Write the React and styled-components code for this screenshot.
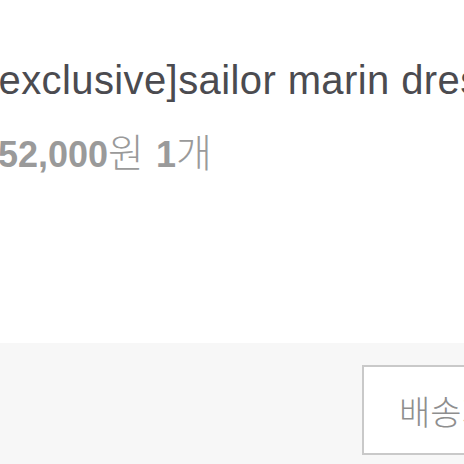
import React from 'react';
import styled, { createGlobalStyle } from 'styled-components';

const Global = createGlobalStyle`
  html, body {
    margin: 0;
    padding: 0;
    background: #fff;
  }
  body {
    font-family: "Liberation Sans", "Noto Sans CJK KR", sans-serif;
  }
`

const Page = styled.div`
  width: 464px;
  height: 464px;
  overflow: hidden;
  display: flex;
  flex-direction: column;
`

const Info = styled.div`
  height: 343px;
  box-sizing: border-box;
  padding-top: 60px;
  white-space: nowrap;
`

const Title = styled.div`
  font-size: 40px;
  line-height: 40px;
  letter-spacing: 0.4px;
  color: #4b4b50;
  margin-left: -13px;
`

const PriceRow = styled.div`
  margin-top: 31px;
  height: 40px;
  font-size: 36px;
  line-height: 40px;
  color: #9a9a9a;
  margin-left: -2px;
`

const Num = styled.b`
  font-weight: 700;
  margin-left: ${p => (p.$gap ? '2px' : '0')};
`

const Unit = styled.span`
  font-family: "Noto Sans CJK KR", sans-serif;
  font-weight: 300;
  font-size: 39px;
  line-height: 1;
`

const Footer = styled.div`
  flex: 1;
  background: #f7f7f7;
  display: flex;
  padding: 22px 0 0 362px;
`

const ShipButton = styled.button`
  flex: none;
  width: 200px;
  height: 90px;
  box-sizing: border-box;
  border: 2px solid #c9c9c9;
  background: #fff;
  color: #8e8e8e;
  font-family: "Noto Sans CJK KR", sans-serif;
  font-weight: 300;
  font-size: 34px;
  text-align: left;
  padding: 0 0 0 35px;
  white-space: nowrap;
`

export default function App() {
  return (
    <>
      <Global />
      <Page>
        <Info>
          <Title>[exclusive]sailor marin dress</Title>
          <PriceRow>
            <Num>52,000</Num><Unit>원</Unit><Num $gap> 1</Num><Unit>개</Unit>
          </PriceRow>
        </Info>
        <Footer>
          <ShipButton>배송지 변경</ShipButton>
        </Footer>
      </Page>
    </>
  );
}
